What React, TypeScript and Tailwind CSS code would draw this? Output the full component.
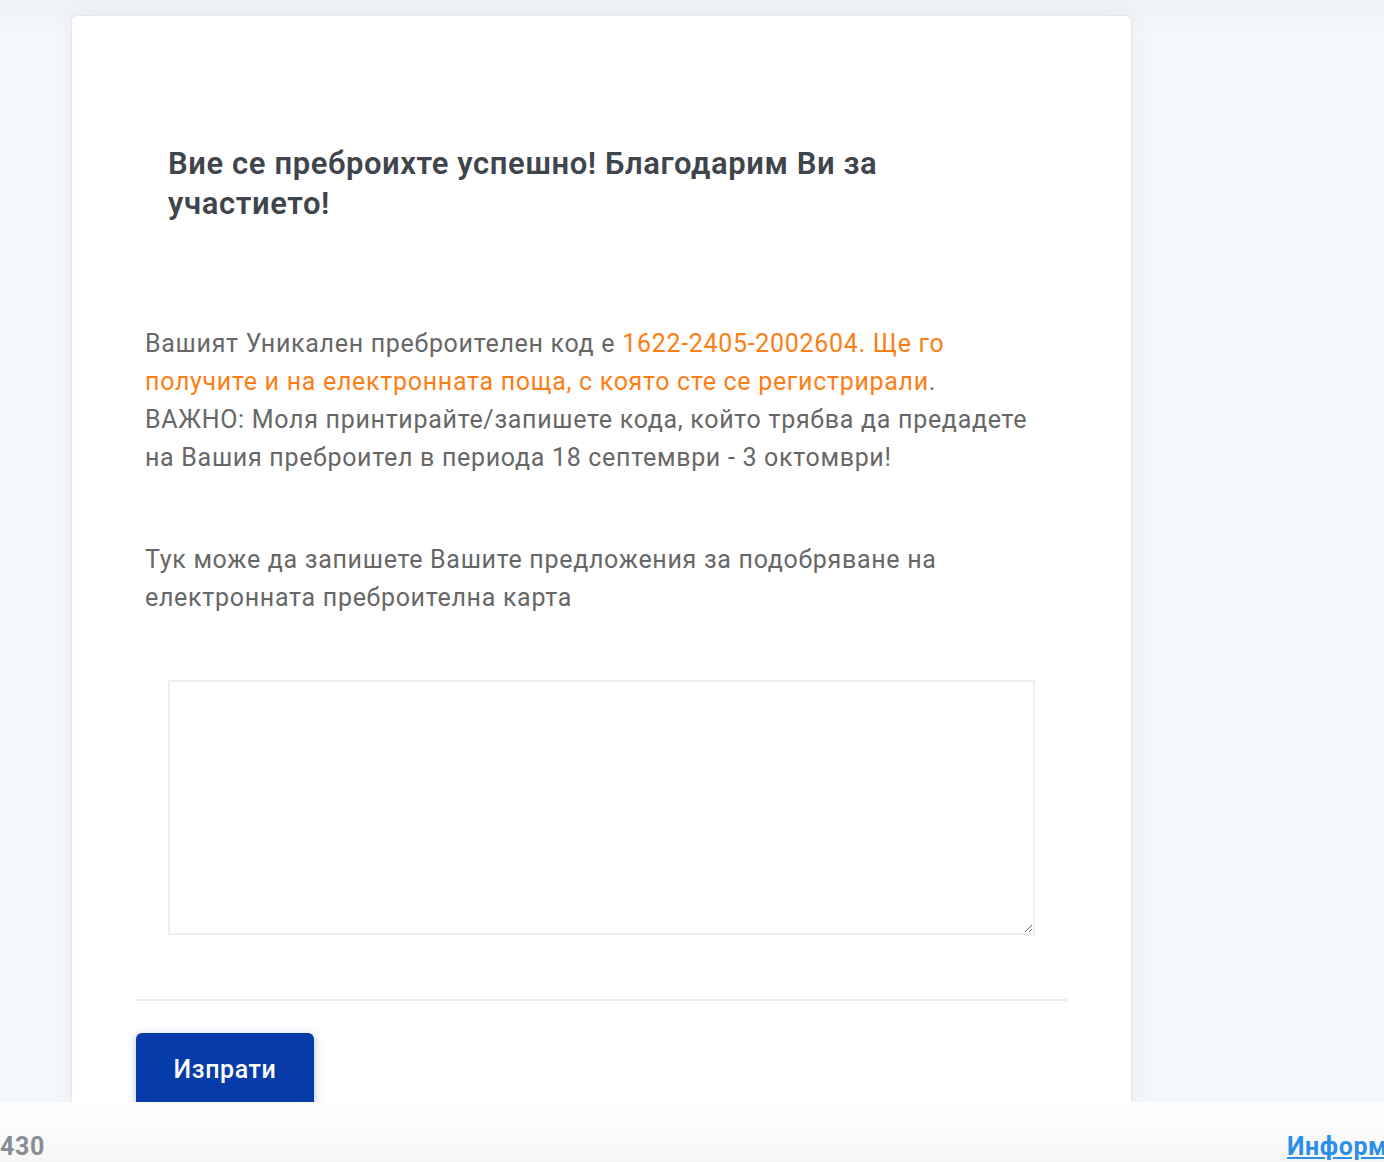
export default function App() {
  return (
    <div className="h-[1162px] w-[1384px] overflow-hidden flex flex-col font-['Roboto',sans-serif]">
      {/* Page area */}
      <div className="h-[1102px] shrink-0 overflow-hidden bg-[#f4f8fb] bg-gradient-to-b from-[#eef3f7] to-[#f5f8fb] to-[3%] pt-[15px] pl-[71px]">
        <div className="w-[1061px] h-[1120px] bg-white rounded-[6px] border border-[#e4e7ea] shadow-[0_0_22px_rgba(40,60,90,0.07)] px-[64px]">
          {/* Heading */}
          <h2 className="pt-[128px] pl-[32px] pr-[150px] text-[31px] leading-[40px] font-semibold tracking-[0.6px] text-[#3f454d]">
            Вие се преброихте успешно! Благодарим Ви за участието!
          </h2>

          {/* Code info */}
          <p className="mt-[101px] pl-[9px] pr-[25px] text-[25px] leading-[38px] tracking-[0.7px] text-[#676767]">
            Вашият Уникален преброителен код е{" "}
            <span className="text-[#fd7e14]">
              1622-2405-2002604. Ще го получите и на електронната поща, с която сте се регистрирали
            </span>
            .
            <br />
            ВАЖНО: Моля принтирайте/запишете кода, който трябва да предадете на Вашия преброител в периода 18 септември - 3 октомври!
          </p>

          {/* Suggestions */}
          <p className="mt-[64px] pl-[9px] pr-[25px] text-[25px] leading-[38px] tracking-[0.7px] text-[#676767]">
            Тук може да запишете Вашите предложения за подобряване на електронната преброителна карта
          </p>

          <div className="mt-[63px] pl-[32px]">
            <textarea className="block w-[867px] h-[255px] border-2 border-[#eeeeee] bg-white outline-none" />
          </div>

          <div className="mt-[64px] h-[2px] bg-[#ebebeb]" />

          <button className="mt-[32px] w-[178px] h-[74px] rounded-[6px] bg-[#073ba9] text-white text-[25px] font-medium tracking-[0.6px] shadow-[0_2px_10px_rgba(7,59,169,0.3)]">
            Изпрати
          </button>
        </div>
      </div>

      {/* Footer */}
      <div className="flex-1 bg-gradient-to-b from-white to-[#f6f6f6] flex justify-between items-start pt-[28px]">
        <span className="text-[25px] font-bold tracking-[0.6px] text-[#878e95] leading-[34px]">430</span>
        <a href="#" className="text-[25px] font-bold tracking-[0.6px] text-[#2b8fe6] underline leading-[34px] whitespace-nowrap w-[97px] overflow-hidden">
          Информация
        </a>
      </div>
    </div>
  );
}
